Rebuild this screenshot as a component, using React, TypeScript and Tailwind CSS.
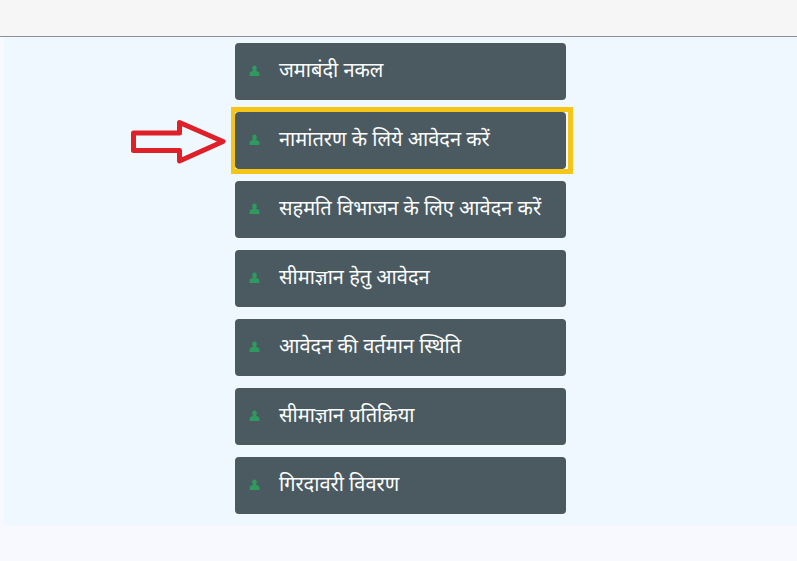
import React from 'react';

const items = [
  'जमाबंदी नकल',
  'नामांतरण के लिये आवेदन करें',
  'सहमति विभाजन के लिए आवेदन करें',
  'सीमाज्ञान हेतु आवेदन',
  'आवेदन की वर्तमान स्थिति',
  'सीमाज्ञान प्रतिक्रिया',
  'गिरदावरी विवरण',
];

const UserIcon = () => (
  <svg width="11" height="12" viewBox="0 0 10 11" className="shrink-0 -translate-y-[1px]">
    <path d="M5 0.5c1.3 0 2.1 1 2.1 2.4 0 1-.4 1.9-1 2.4 1.8.4 3.4 1.2 3.4 2.6v2.1h-9V7.9c0-1.4 1.6-2.2 3.4-2.6-.6-.5-1-1.4-1-2.4C2.9 1.5 3.7.5 5 .5z" fill="#2f9a60" />
  </svg>
);

export default function App() {
  return (
    <div className="relative h-[561px] w-[797px] overflow-hidden bg-[#f8f9ff] font-['Noto_Sans','Liberation_Sans',sans-serif]">
      <div className="h-[37px] border-b border-[#8a9094] bg-[#f6f6f6]" />
      <div className="ml-[4px] flex h-[488px] flex-col items-center bg-[#eff8ff] pt-[6px]">
        <div className="flex flex-col gap-[12px]">
          {items.map((label, i) => (
            <div key={label} className="relative">
              <div className="flex h-[57px] w-[331px] items-center rounded-[4px] bg-[#4b5a60] pl-[14px]">
                <UserIcon />
                <span className="ml-[19px] -translate-y-[2px] text-[20px] leading-none text-[#fbfdfd]">{label}</span>
              </div>
              {i === 1 && (
                <div className="absolute -bottom-[5px] -left-[4px] -right-[7px] -top-[5px] border-[5px] border-l-[4px] border-[#f5c518]" />
              )}
            </div>
          ))}
        </div>
      </div>
      {/* red arrow over the page */}
      <svg className="absolute left-[130px] top-[119px]" width="98" height="46" viewBox="0 0 98 46">
        <path d="M3.5 14H49.5V3.5L93 22.5L49.5 42V31.5H3.5Z" fill="none" stroke="#e02028" strokeWidth="5" strokeLinejoin="round" />
      </svg>
    </div>
  );
}
